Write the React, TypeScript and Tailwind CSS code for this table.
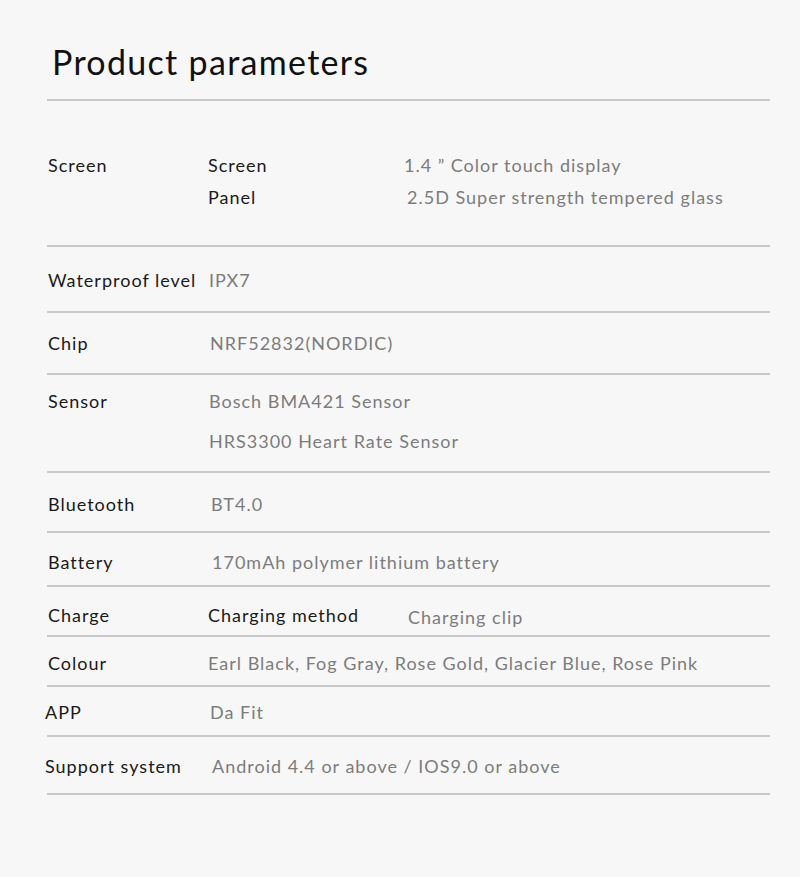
const font = "font-['Lato','Liberation_Sans',sans-serif]";

type Spec = {
  box: string;
  label: string;
  labelCls: string;
  valueCls: string;
  values: string[];
};

const rows: Spec[] = [
  {
    box: "h-[66px] pt-[21px]",
    label: "Waterproof level",
    labelCls: "w-[162px] pl-[1px]",
    valueCls: "",
    values: ["IPX7"],
  },
  {
    box: "h-[62px] pt-[18px]",
    label: "Chip",
    labelCls: "w-[163px] pl-[1px]",
    valueCls: "",
    values: ["NRF52832(NORDIC)"],
  },
  {
    box: "h-[98px] pt-[14px]",
    label: "Sensor",
    labelCls: "w-[162px] pl-[1px]",
    valueCls: "gap-[16px]",
    values: ["Bosch BMA421 Sensor", "HRS3300 Heart Rate Sensor"],
  },
  {
    box: "h-[60px] pt-[19px]",
    label: "Bluetooth",
    labelCls: "w-[164px] pl-[1px]",
    valueCls: "",
    values: ["BT4.0"],
  },
  {
    box: "h-[54px] pt-[17px]",
    label: "Battery",
    labelCls: "w-[165px] pl-[1px]",
    valueCls: "",
    values: ["170mAh polymer lithium battery"],
  },
];

const rows2: Spec[] = [
  {
    box: "h-[50px] pt-[14px]",
    label: "Colour",
    labelCls: "w-[161px] pl-[1px]",
    valueCls: "",
    values: ["Earl Black, Fog Gray, Rose Gold, Glacier Blue, Rose Pink"],
  },
  {
    box: "h-[50px] pt-[13px]",
    label: "APP",
    labelCls: "w-[165px] -ml-[2px] pl-0",
    valueCls: "",
    values: ["Da Fit"],
  },
  {
    box: "h-[60px] pt-[17px] border-b-2",
    label: "Support system",
    labelCls: "w-[167px] -ml-[2px] pl-0",
    valueCls: "",
    values: ["Android 4.4 or above / IOS9.0 or above"],
  },
];

function Row({ spec }: { spec: Spec }) {
  return (
    <div className={`flex border-t-2 border-[#c8c8c8] ${spec.box}`}>
      <div className={`shrink-0 text-[#1a1a1a] ${spec.labelCls}`}>{spec.label}</div>
      <div className={`flex flex-col text-[#7c7c7c] ${spec.valueCls}`}>
        {spec.values.map((v) => (
          <div key={v}>{v}</div>
        ))}
      </div>
    </div>
  );
}

export default function App() {
  return (
    <div className={`min-h-[877px] w-[800px] bg-[#f7f7f7] ${font}`}>
      <div className="h-[99px] pl-[52px] pt-[43px]">
        <h1 className="text-[34px] leading-[38px] tracking-[1.3px] text-[#111]">
          Product parameters
        </h1>
      </div>

      <div className="ml-[47px] w-[723px] text-[18px] leading-[24px] tracking-[1px]">
        {/* screen */}
        <div className="flex h-[146px] border-t-2 border-[#c8c8c8] pt-[52px]">
          <div className="w-[161px] shrink-0 pl-[1px] text-[#1a1a1a]">Screen</div>
          <div className="flex w-[196px] shrink-0 flex-col gap-[8px] text-[#1a1a1a]">
            <div>Screen</div>
            <div>Panel</div>
          </div>
          <div className="flex flex-col gap-[8px] text-[#7c7c7c]">
            <div>1.4 ” Color touch display</div>
            <div className="pl-[3px]">2.5D Super strength tempered glass</div>
          </div>
        </div>

        {rows.map((r) => (
          <Row key={r.label} spec={r} />
        ))}

        {/* charge */}
        <div className="flex h-[50px] border-t-2 border-[#c8c8c8] pt-[16px]">
          <div className="w-[161px] shrink-0 pl-[1px] text-[#1a1a1a]">Charge</div>
          <div className="w-[200px] shrink-0 text-[#1a1a1a]">Charging method</div>
          <div className="pt-[2px] text-[#7c7c7c]">Charging clip</div>
        </div>

        {rows2.map((r) => (
          <Row key={r.label} spec={r} />
        ))}
      </div>
    </div>
  );
}
